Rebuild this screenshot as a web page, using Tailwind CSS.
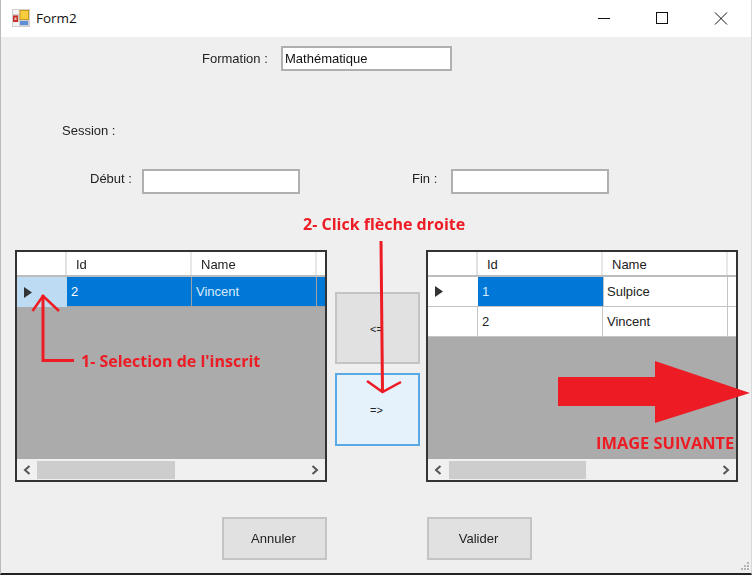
<!DOCTYPE html>
<html lang="fr">
<head>
<meta charset="utf-8">
<script src="https://cdn.jsdelivr.net/npm/@tailwindcss/browser@4"></script>
<title>Form2</title>
</head>
<body class="m-0 bg-[#efefef]">
<div class="relative w-[752px] h-[575px] overflow-hidden bg-[#efefef] font-['Liberation_Sans',sans-serif] text-[13px] text-[#222] border-b-2 border-b-[#222] border-r border-r-[#d8d8d8] border-l border-l-[#bbb]">
  <!-- Title bar -->
  <div class="h-[37px] -ml-px bg-white flex items-center">
    <svg class="ml-3 w-[18px] h-[18px] -mt-[1px]" viewBox="0 0 18 18">
      <rect width="18" height="18" fill="#cfcfcf"/>
      <rect x="1" y="1" width="6" height="4" fill="#f4f4f4"/>
      <rect x="1" y="13" width="6" height="4" fill="#f4f4f4"/>
      <rect x="1" y="6.5" width="5" height="6.5" fill="#c8302c"/>
      <rect x="2.5" y="8.5" width="2" height="2.5" fill="#f3c0b0"/>
      <rect x="7.5" y="1" width="9.5" height="10" fill="#c99a20"/>
      <rect x="8.5" y="2" width="7.5" height="8" fill="#f8cc3c"/>
      <rect x="8" y="12" width="8" height="4" fill="#5b8fd8"/>
    </svg>
    <span class="ml-[6px] font-['Open_Sans',sans-serif] text-[13.5px] text-[#111]">Form2</span>
    <div class="ml-auto flex items-center">
      <svg class="w-[146px] h-[14px]" viewBox="0 0 146 14" fill="none" stroke="#111" stroke-width="1">
        <path d="M0 6.5H12"/>
        <rect x="58.5" y="0.5" width="11" height="11"/>
        <path d="M117 0.5L129 12.5M129 0.5L117 12.5"/>
      </svg>
      <div class="w-[7px]"></div>
    </div>
  </div>

  <div class="blur-[0.35px]">
  <!-- Formation -->
  <div class="pt-[9px] h-[34px] ml-[201px] flex items-center">
    <span class="w-[79px]">Formation :</span>
    <div class="w-[171px] h-[25px] bg-white border-2 border-[#b0b0b0] pl-[2px] flex items-center text-[#111]">Mathématique</div>
  </div>

  <!-- Session -->
  <div class="mt-[50px] h-[20px] ml-[61px] flex items-center">Session :</div>

  <!-- Debut / Fin -->
  <div class="mt-[28px] h-[25px] flex items-center">
    <span class="ml-[89px] w-[52px] -mt-[5px]">Début :</span>
    <div class="w-[158px] h-[25px] bg-white border-2 border-[#b0b0b0]"></div>
    <span class="ml-[112px] w-[39px] -mt-[5px]">Fin :</span>
    <div class="w-[158px] h-[25px] bg-white border-2 border-[#b0b0b0]"></div>
  </div>

  <!-- Grids -->
  <div class="mt-[56px] ml-[14px] h-[232px] flex items-start">
    <!-- Left grid -->
    <div class="w-[312px] h-[232px] border-2 border-[#333] bg-[#ababab] flex flex-col">
      <div class="h-[25px] bg-white flex border-b-2 border-b-[#bdbdbd]">
        <div class="w-[50px] border-r-2 border-r-[#e2e2e2]"></div>
        <div class="w-[125px] pl-[9px] pt-[2px] border-r-2 border-r-[#e8e8e8] flex items-center">Id</div>
        <div class="w-[125px] pl-[9px] pt-[2px] border-r-2 border-r-[#e8e8e8] flex items-center">Name</div>
      </div>
      <div class="h-[30px] flex">
        <div class="w-[50px] bg-[#bddcf3] flex items-center pl-[7px]">
          <svg class="w-[9px] h-[11px]" viewBox="0 0 9 11"><path d="M0 0L8 5.5L0 11Z" fill="#333"/></svg>
        </div>
        <div class="w-[125px] pl-[4px] bg-[#0078d7] text-white border-r border-r-[#a0a0a0] border-b border-b-[#a0a0a0] flex items-center">2</div>
        <div class="w-[125px] pl-[4px] bg-[#0078d7] text-[#d9ebfa] border-r border-r-[#a0a0a0] border-b border-b-[#a0a0a0] flex items-center">Vincent</div>
        <div class="flex-1 bg-[#0078d7] border-b border-b-[#a0a0a0]"></div>
      </div>
      <div class="flex-1"></div>
      <div class="h-[21px] bg-[#f0f0f0] flex items-center">
        <svg class="ml-[6px] w-[8px] h-[10px]" viewBox="0 0 8 10" fill="none" stroke="#555" stroke-width="2"><path d="M6.5 1L2 5L6.5 9"/></svg>
        <div class="ml-[6px] w-[138px] h-[18px] bg-[#cdcdcd]"></div>
        <svg class="ml-auto mr-[6px] w-[8px] h-[10px]" viewBox="0 0 8 10" fill="none" stroke="#555" stroke-width="2"><path d="M1.5 1L6 5L1.5 9"/></svg>
      </div>
    </div>

    <!-- Move buttons -->
    <div class="ml-[8px] w-[85px] pt-[42px] flex flex-col gap-[9px] text-[11px]">
      <div class="h-[72px] pr-[2px] pt-[2px] bg-[#e1e1e1] border-2 border-[#c4c4c4] flex items-center justify-center">&lt;=</div>
      <div class="h-[73px] pr-[2px] pt-[2px] bg-[#e5f1fb] border-2 border-[#5aa8e4] flex items-center justify-center">=&gt;</div>
    </div>

    <!-- Right grid -->
    <div class="ml-[6px] w-[312px] h-[232px] border-2 border-[#333] bg-[#ababab] flex flex-col">
      <div class="h-[25px] bg-white flex border-b-2 border-b-[#bdbdbd]">
        <div class="w-[50px] border-r-2 border-r-[#e2e2e2]"></div>
        <div class="w-[125px] pl-[9px] pt-[2px] border-r-2 border-r-[#e8e8e8] flex items-center">Id</div>
        <div class="w-[125px] pl-[9px] pt-[2px] border-r-2 border-r-[#e8e8e8] flex items-center">Name</div>
      </div>
      <div class="h-[30px] flex bg-white border-b border-b-[#c4c4c4]">
        <div class="w-[50px] flex items-center pl-[7px]">
          <svg class="w-[9px] h-[11px]" viewBox="0 0 9 11"><path d="M0 0L8 5.5L0 11Z" fill="#333"/></svg>
        </div>
        <div class="w-[125px] pl-[4px] bg-[#0078d7] text-[#d9ebfa] flex items-center">1</div>
        <div class="w-[125px] pl-[3px] border-l border-r border-[#c4c4c4] flex items-center">Sulpice</div>
      </div>
      <div class="h-[30px] flex bg-white border-b border-b-[#c4c4c4]">
        <div class="w-[50px] border-r border-r-[#c4c4c4]"></div>
        <div class="w-[125px] pl-[4px] border-r border-r-[#c4c4c4] flex items-center">2</div>
        <div class="w-[125px] pl-[4px] border-r border-r-[#c4c4c4] flex items-center">Vincent</div>
      </div>
      <div class="flex-1"></div>
      <div class="h-[21px] bg-[#f0f0f0] flex items-center">
        <svg class="ml-[6px] w-[8px] h-[10px]" viewBox="0 0 8 10" fill="none" stroke="#555" stroke-width="2"><path d="M6.5 1L2 5L6.5 9"/></svg>
        <div class="ml-[7px] w-[137px] h-[18px] bg-[#cdcdcd]"></div>
        <svg class="ml-auto mr-[6px] w-[8px] h-[10px]" viewBox="0 0 8 10" fill="none" stroke="#555" stroke-width="2"><path d="M1.5 1L6 5L1.5 9"/></svg>
      </div>
    </div>
  </div>

  <!-- Bottom buttons -->
  <div class="mt-[35px] ml-[221px] flex gap-[100px]">
    <div class="w-[105px] h-[43px] pr-[2px] bg-[#e1e1e1] border-2 border-[#c4c4c4] flex items-center justify-center">Annuler</div>
    <div class="w-[105px] h-[43px] pr-[2px] bg-[#e1e1e1] border-2 border-[#c4c4c4] flex items-center justify-center">Valider</div>
  </div>
  </div>

  <!-- Resize grip -->
  <svg class="absolute right-[1px] bottom-[1px] w-[10px] h-[10px]" viewBox="0 0 10 10" fill="#b4b4b4">
    <rect x="7" y="0" width="2" height="2"/><rect x="4" y="3" width="2" height="2"/><rect x="7" y="3" width="2" height="2"/>
    <rect x="1" y="6" width="2" height="2"/><rect x="4" y="6" width="2" height="2"/><rect x="7" y="6" width="2" height="2"/>
  </svg>

  <!-- Annotations -->
  <svg class="absolute -left-px top-0 w-[752px] h-[575px] pointer-events-none" viewBox="0 0 752 575" fill="none" stroke="#ed1c24" stroke-width="3">
    <path d="M43 295V360.5H74"/>
    <path d="M32.5 311L43 296L59 311" stroke-width="2.5"/>
    <path d="M381 241L382.5 392"/>
    <path d="M367 381L382.5 392L401 382" stroke-width="2.5"/>
    <path d="M558 377H655V361L750 393L655 423V406H558Z" fill="#ed1c24" stroke="none"/>
  </svg>
  <span class="absolute left-[302px] top-[213px] font-['Open_Sans',sans-serif] font-bold text-[16px] leading-[22px] text-[#ed1c24]">2- Click flèche droite</span>
  <span class="absolute left-[80px] top-[350px] font-['Open_Sans',sans-serif] font-bold text-[16px] leading-[22px] text-[#ed1c24]">1- Selection de l'inscrit</span>
  <span class="absolute left-[595px] top-[432px] font-['Open_Sans',sans-serif] font-bold text-[16.4px] leading-[22px] text-[#ed1c24]">IMAGE SUIVANTE</span>
</div>
</body>
</html>
